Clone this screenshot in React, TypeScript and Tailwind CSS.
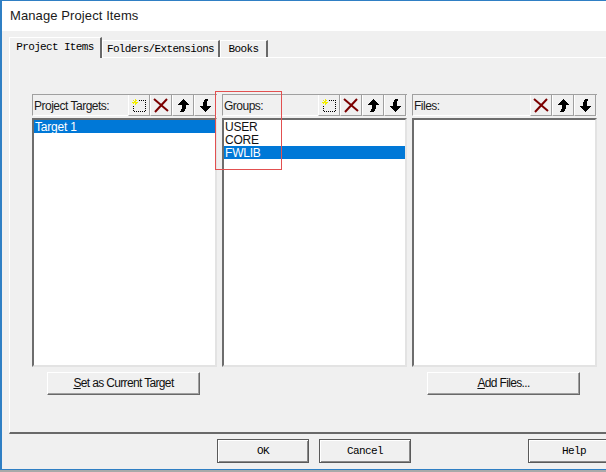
import React from "react";

const mono = "font-['Liberation_Mono','DejaVu_Sans_Mono',monospace]";

const sunkenBox =
  "border-t-2 border-l-2 border-t-[#6d6d6d] border-l-[#6d6d6d] border-r-2 border-b-2 border-r-[#e3e3e3] border-b-[#e3e3e3] bg-white";

const raisedBtn =
  "border border-t-white border-l-white border-r-[#696969] border-b-[#696969] shadow-[inset_-1px_-1px_0_#a0a0a0] bg-[#f0f0f0]";

const NewIcon = () => (
  <svg width="16" height="16" viewBox="0 0 16 16" shapeRendering="crispEdges">
    <path d="M8 3.5h6.5v11h-12V9" fill="none" stroke="#000" strokeDasharray="1 1" />
    <path d="M4 2v6M1 5h6M2 3l4 4M6 3l-4 4" stroke="#f4f000" fill="none" />
  </svg>
);

const DelIcon = () => (
  <svg width="16" height="16" viewBox="0 0 16 16">
    <path d="M1 2l14 12M14 2L2 15" stroke="#7b0000" strokeWidth="2" fill="none" />
  </svg>
);

const UpIcon = () => (
  <svg width="16" height="16" viewBox="0 0 16 16" shapeRendering="crispEdges">
    <path d="M8 2l6 6h-3v3l-2 4H5l2-4V8H2z" fill="#000" />
  </svg>
);

const DownIcon = () => (
  <svg width="16" height="16" viewBox="0 0 16 16" shapeRendering="crispEdges">
    <path d="M8 15l6-6h-4V7l1-5H8L6 6v3H2z" fill="#000" />
  </svg>
);

const ToolBtn = ({ children }: { children: React.ReactNode }) => (
  <div className="w-[22px] h-[21px] flex items-center justify-center border-r border-b border-r-[#a0a0a0] border-b-[#a0a0a0] border-l border-l-white">
    {children}
  </div>
);

const ListPanel = ({
  title,
  icons,
  rows,
}: {
  title: string;
  icons: React.ReactNode[];
  rows: { text: string; selected?: boolean }[];
}) => (
  <div className="flex flex-col w-[185px]">
    <div className="h-[22px] border-t border-l border-t-[#a0a0a0] border-l-[#a0a0a0] border-b border-b-white flex items-center justify-between pr-[1px]">
      <span className="pl-[1px] pt-[2px] text-[12px] tracking-[-0.5px] text-[#1a1a1a]">{title}</span>
      <div className="flex -mb-[1px]">
        {icons.map((ic, i) => (
          <ToolBtn key={i}>{ic}</ToolBtn>
        ))}
      </div>
    </div>
    <div className={`mt-[2px] h-[249px] ${sunkenBox}`}>
      {rows.map((r) => (
        <div
          key={r.text}
          className={`h-[13px] leading-[15px] pl-[1px] text-[12px] tracking-[-0.2px] ${
            r.selected ? "bg-[#0078d7] text-white" : "text-[#111]"
          }`}
        >
          {r.text}
        </div>
      ))}
    </div>
  </div>
);

const Tab = ({ label, width, active }: { label: string; width: string; active?: boolean }) => (
  <div
    className={`${mono} ${width} shrink-0 text-[11px] tracking-[-0.65px] leading-none flex items-center justify-center border-t border-l border-t-white border-l-white border-r-2 border-r-[#696969] ${
      active ? "h-[21px] relative z-10 bg-[#f0f0f0] -mb-[1px] pb-[2px]" : "h-[17px]"
    }`}
  >
    {label}
  </div>
);

const BottomBtn = ({ label, width }: { label: string; width: string }) => (
  <div
    className={`${width} shrink-0 h-[24px] flex items-center justify-center ${mono} text-[11px] tracking-[-0.6px] border border-[#5a5a5a] shadow-[inset_1px_1px_0_#fff,inset_-1px_-1px_0_#8a8a8a]`}
  >
    {label}
  </div>
);

export default function App() {
  return (
    <div className="relative w-[606px] h-[472px] overflow-hidden bg-[#a9a9a9] font-['Liberation_Sans',Arial,sans-serif]">
      <div className="h-[470px] border-t border-l-2 border-b border-t-[#2f7fc4] border-l-[#2f7fc4] border-b-[#2f7fc4] bg-[#f0f0f0] flex flex-col">
        <div className="h-[30px] shrink-0 bg-white flex items-center pl-[8px] text-[13px] text-[#1a1a1a] tracking-[0.1px]">
          Manage Project Items
        </div>
        <div className="flex-1 pl-[7px] pt-[6px] flex flex-col">
          <div className="flex items-end h-[20px]">
            <Tab label="Project Items" width="w-[93px]" active />
            <Tab label="Folders/Extensions" width="w-[118px]" />
            <Tab label="Books" width="w-[48px]" />
          </div>
          <div className="h-[377px] shrink-0 border-t border-l border-t-white border-l-white border-b-2 border-b-[#696969] pl-[22px] pt-[36px] flex flex-col">
            <div className="flex gap-[5px]">
              <ListPanel
                title="Project Targets:"
                icons={[<NewIcon />, <DelIcon />, <UpIcon />, <DownIcon />]}
                rows={[{ text: "Target 1", selected: true }]}
              />
              <ListPanel
                title="Groups:"
                icons={[<NewIcon />, <DelIcon />, <UpIcon />, <DownIcon />]}
                rows={[
                  { text: "USER" },
                  { text: "CORE" },
                  { text: "FWLIB", selected: true },
                ]}
              />
              <ListPanel
                title="Files:"
                icons={[<DelIcon />, <UpIcon />, <DownIcon />]}
                rows={[]}
              />
            </div>
            <div className="flex mt-[5px] text-[12px] tracking-[-0.65px] text-[#111]">
              <div className={`ml-[15px] w-[153px] h-[23px] pb-[1px] flex items-center justify-center ${raisedBtn}`}>
                <span>
                  <u>S</u>et as Current Target
                </span>
              </div>
              <div className={`ml-[227px] w-[153px] h-[23px] pb-[1px] flex items-center justify-center ${raisedBtn}`}>
                <span>
                  <u>A</u>dd Files...
                </span>
              </div>
            </div>
          </div>
          <div className="flex pt-[5px] pl-[208px]">
            <BottomBtn label="OK" width="w-[92px]" />
            <div className="w-[10px] shrink-0" />
            <BottomBtn label="Cancel" width="w-[92px]" />
            <div className="w-[117px] shrink-0" />
            <BottomBtn label="Help" width="w-[92px]" />
          </div>
        </div>
      </div>
      {/* red marker drawn over the screenshot */}
      <div className="absolute left-[215px] top-[91px] w-[67px] h-[79px] border border-[#e25050] pointer-events-none" />
    </div>
  );
}
